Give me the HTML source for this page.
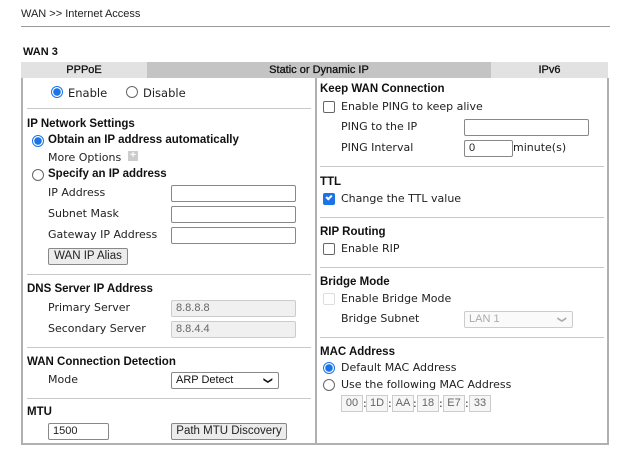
<!DOCTYPE html>
<html><head><meta charset="utf-8"><style>
*{margin:0;padding:0;box-sizing:border-box}
body{width:623px;height:454px;background:#fff;position:relative;overflow:hidden;font-family:"DejaVu Sans",Verdana,sans-serif;font-size:11px;color:#222}
.a{position:absolute;line-height:14px;white-space:nowrap}
.h{font-family:"Liberation Sans",Arial,sans-serif;font-weight:bold;font-size:11.5px;color:#111}
.hr{position:absolute;height:1px;background:#c8c8c8}
.in{position:absolute;border:1px solid #888;background:#fff;border-radius:2px;height:17px;font-family:"Liberation Sans",Arial,sans-serif;font-size:11px;line-height:15px;padding-left:4px}
.dis{background:#f0f0f0;border-color:#ccc;color:#666}
.btn{position:absolute;border:1px solid #888;background:#ececec;border-radius:2px;height:17px;font-family:"Liberation Sans",Arial,sans-serif;font-size:11.5px;line-height:15px;text-align:center;color:#222}
.r{position:absolute;width:12px;height:12px;border:1px solid #666;border-radius:50%;background:#fff}
.r.on{border:1px solid #1a73e8;background:radial-gradient(circle,#1a73e8 0 3.5px,#fff 4px)}
.c{position:absolute;width:12px;height:12px;border:1px solid #666;border-radius:2px;background:#fff}
.c.on{background:#1a73e8;border-color:#1a73e8}
.c.dis{border-color:#ddd}
.m{position:absolute;top:395px;width:22px;height:17px;border:1px solid #ccc;background:#f6f6f6;font-family:"Liberation Sans",Arial,sans-serif;font-size:11px;line-height:15px;text-align:center;color:#666}
.tab{position:absolute;top:62px;height:16px;font-family:"Liberation Sans",Arial,sans-serif;font-size:11px;line-height:16px;text-align:center;color:#111;-webkit-text-stroke:0.3px #111}
</style></head><body>
<div class="a h" style="left:21px;top:7px;font-weight:normal;font-size:11px;color:#222">WAN &gt;&gt; Internet Access</div>
<div class="hr" style="left:21px;top:26px;width:589px;background:#999"></div>
<div class="a h" style="left:23px;top:45px;font-size:11px">WAN 3</div>
<div class="tab" style="left:21px;width:126px;background:#e2e2e2">PPPoE</div>
<div class="tab" style="left:147px;width:344px;background:#c4c4c4">Static or Dynamic IP</div>
<div class="tab" style="left:491px;width:117px;background:#e2e2e2">IPv6</div>
<div style="position:absolute;left:21px;top:78px;width:588px;height:367px;border:2px solid #b0b0b0;border-top:none"></div>
<div style="position:absolute;left:315px;top:78px;width:2px;height:366px;background:#b0b0b0"></div>

<!-- left -->
<div class="r on" style="left:51px;top:86px"></div><div class="a" style="left:68px;top:86px;font-size:11.5px">Enable</div>
<div class="r" style="left:126px;top:86px"></div><div class="a" style="left:143px;top:86px;font-size:11.5px">Disable</div>
<div class="hr" style="left:27px;top:108px;width:284px"></div>
<div class="a h" style="left:27px;top:117px">IP Network Settings</div>
<div class="r on" style="left:32px;top:135px"></div><div class="a h" style="left:48px;top:133px">Obtain an IP address automatically</div>
<div class="a" style="left:48px;top:151px">More Options</div>
<div style="position:absolute;left:128px;top:151px;width:10px;height:10px;background:#ccc;color:#fff;font:bold 10px/10px Arial;text-align:center">+</div>
<div class="r" style="left:32px;top:169px"></div><div class="a h" style="left:48px;top:167px">Specify an IP address</div>
<div class="a" style="left:48px;top:186px">IP Address</div><div class="in" style="left:171px;top:185px;width:125px"></div>
<div class="a" style="left:48px;top:207px">Subnet Mask</div><div class="in" style="left:171px;top:206px;width:125px"></div>
<div class="a" style="left:48px;top:228px">Gateway IP Address</div><div class="in" style="left:171px;top:227px;width:125px"></div>
<div class="btn" style="left:48px;top:248px;width:80px">WAN IP Alias</div>
<div class="hr" style="left:27px;top:274px;width:284px"></div>
<div class="a h" style="left:27px;top:282px">DNS Server IP Address</div>
<div class="a" style="left:48px;top:301px">Primary Server</div><div class="in dis" style="left:171px;top:300px;width:125px">8.8.8.8</div>
<div class="a" style="left:48px;top:322px">Secondary Server</div><div class="in dis" style="left:171px;top:321px;width:125px">8.8.4.4</div>
<div class="hr" style="left:27px;top:347px;width:284px"></div>
<div class="a h" style="left:27px;top:355px">WAN Connection Detection</div>
<div class="a" style="left:48px;top:373px">Mode</div>
<div class="in" style="left:171px;top:372px;width:108px;color:#111">ARP Detect<span style="position:absolute;right:6px;top:0;font-size:9px;transform:rotate(90deg)">&#10095;</span></div>
<div class="hr" style="left:27px;top:398px;width:284px"></div>
<div class="a h" style="left:27px;top:405px">MTU</div>
<div class="in" style="left:48px;top:423px;width:61px">1500</div>
<div class="btn" style="left:171px;top:423px;width:116px">Path MTU Discovery</div>

<!-- right -->
<div class="a h" style="left:320px;top:82px">Keep WAN Connection</div>
<div class="c" style="left:323px;top:101px"></div><div class="a" style="left:341px;top:100px">Enable PING to keep alive</div>
<div class="a" style="left:341px;top:120px">PING to the IP</div><div class="in" style="left:464px;top:119px;width:125px"></div>
<div class="a" style="left:341px;top:141px">PING Interval</div><div class="in" style="left:464px;top:140px;width:49px">0</div><div class="a" style="left:513px;top:141px">minute(s)</div>
<div class="hr" style="left:320px;top:166px;width:284px"></div>
<div class="a h" style="left:320px;top:175px">TTL</div>
<div class="c on" style="left:323px;top:193px"></div><div style="position:absolute;left:326px;top:195px;width:6px;height:4px;border-left:2px solid #fff;border-bottom:2px solid #fff;transform:rotate(-45deg)"></div>
<div class="a" style="left:341px;top:192px">Change the TTL value</div>
<div class="hr" style="left:320px;top:217px;width:284px"></div>
<div class="a h" style="left:320px;top:225px">RIP Routing</div>
<div class="c" style="left:323px;top:243px"></div><div class="a" style="left:341px;top:242px">Enable RIP</div>
<div class="hr" style="left:320px;top:267px;width:284px"></div>
<div class="a h" style="left:320px;top:275px">Bridge Mode</div>
<div class="c dis" style="left:323px;top:293px"></div><div class="a" style="left:341px;top:292px">Enable Bridge Mode</div>
<div class="a" style="left:341px;top:312px">Bridge Subnet</div>
<div class="in dis" style="left:464px;top:311px;width:109px;background:#fafafa;color:#aaa">LAN 1<span style="position:absolute;right:6px;top:0;font-size:9px;color:#aaa;transform:rotate(90deg)">&#10095;</span></div>
<div class="hr" style="left:320px;top:337px;width:284px"></div>
<div class="a h" style="left:320px;top:345px">MAC Address</div>
<div class="r on" style="left:323px;top:362px"></div><div class="a" style="left:341px;top:361px">Default MAC Address</div>
<div class="r" style="left:323px;top:379px"></div><div class="a" style="left:341px;top:378px">Use the following MAC Address</div>
<div class="m" style="left:341px">00</div><div class="a" style="left:363px;top:397px">:</div>
<div class="m" style="left:366px">1D</div><div class="a" style="left:388px;top:397px">:</div>
<div class="m" style="left:392px">AA</div><div class="a" style="left:413px;top:397px">:</div>
<div class="m" style="left:417px">18</div><div class="a" style="left:439px;top:397px">:</div>
<div class="m" style="left:443px">E7</div><div class="a" style="left:465px;top:397px">:</div>
<div class="m" style="left:469px">33</div>
</body></html>
